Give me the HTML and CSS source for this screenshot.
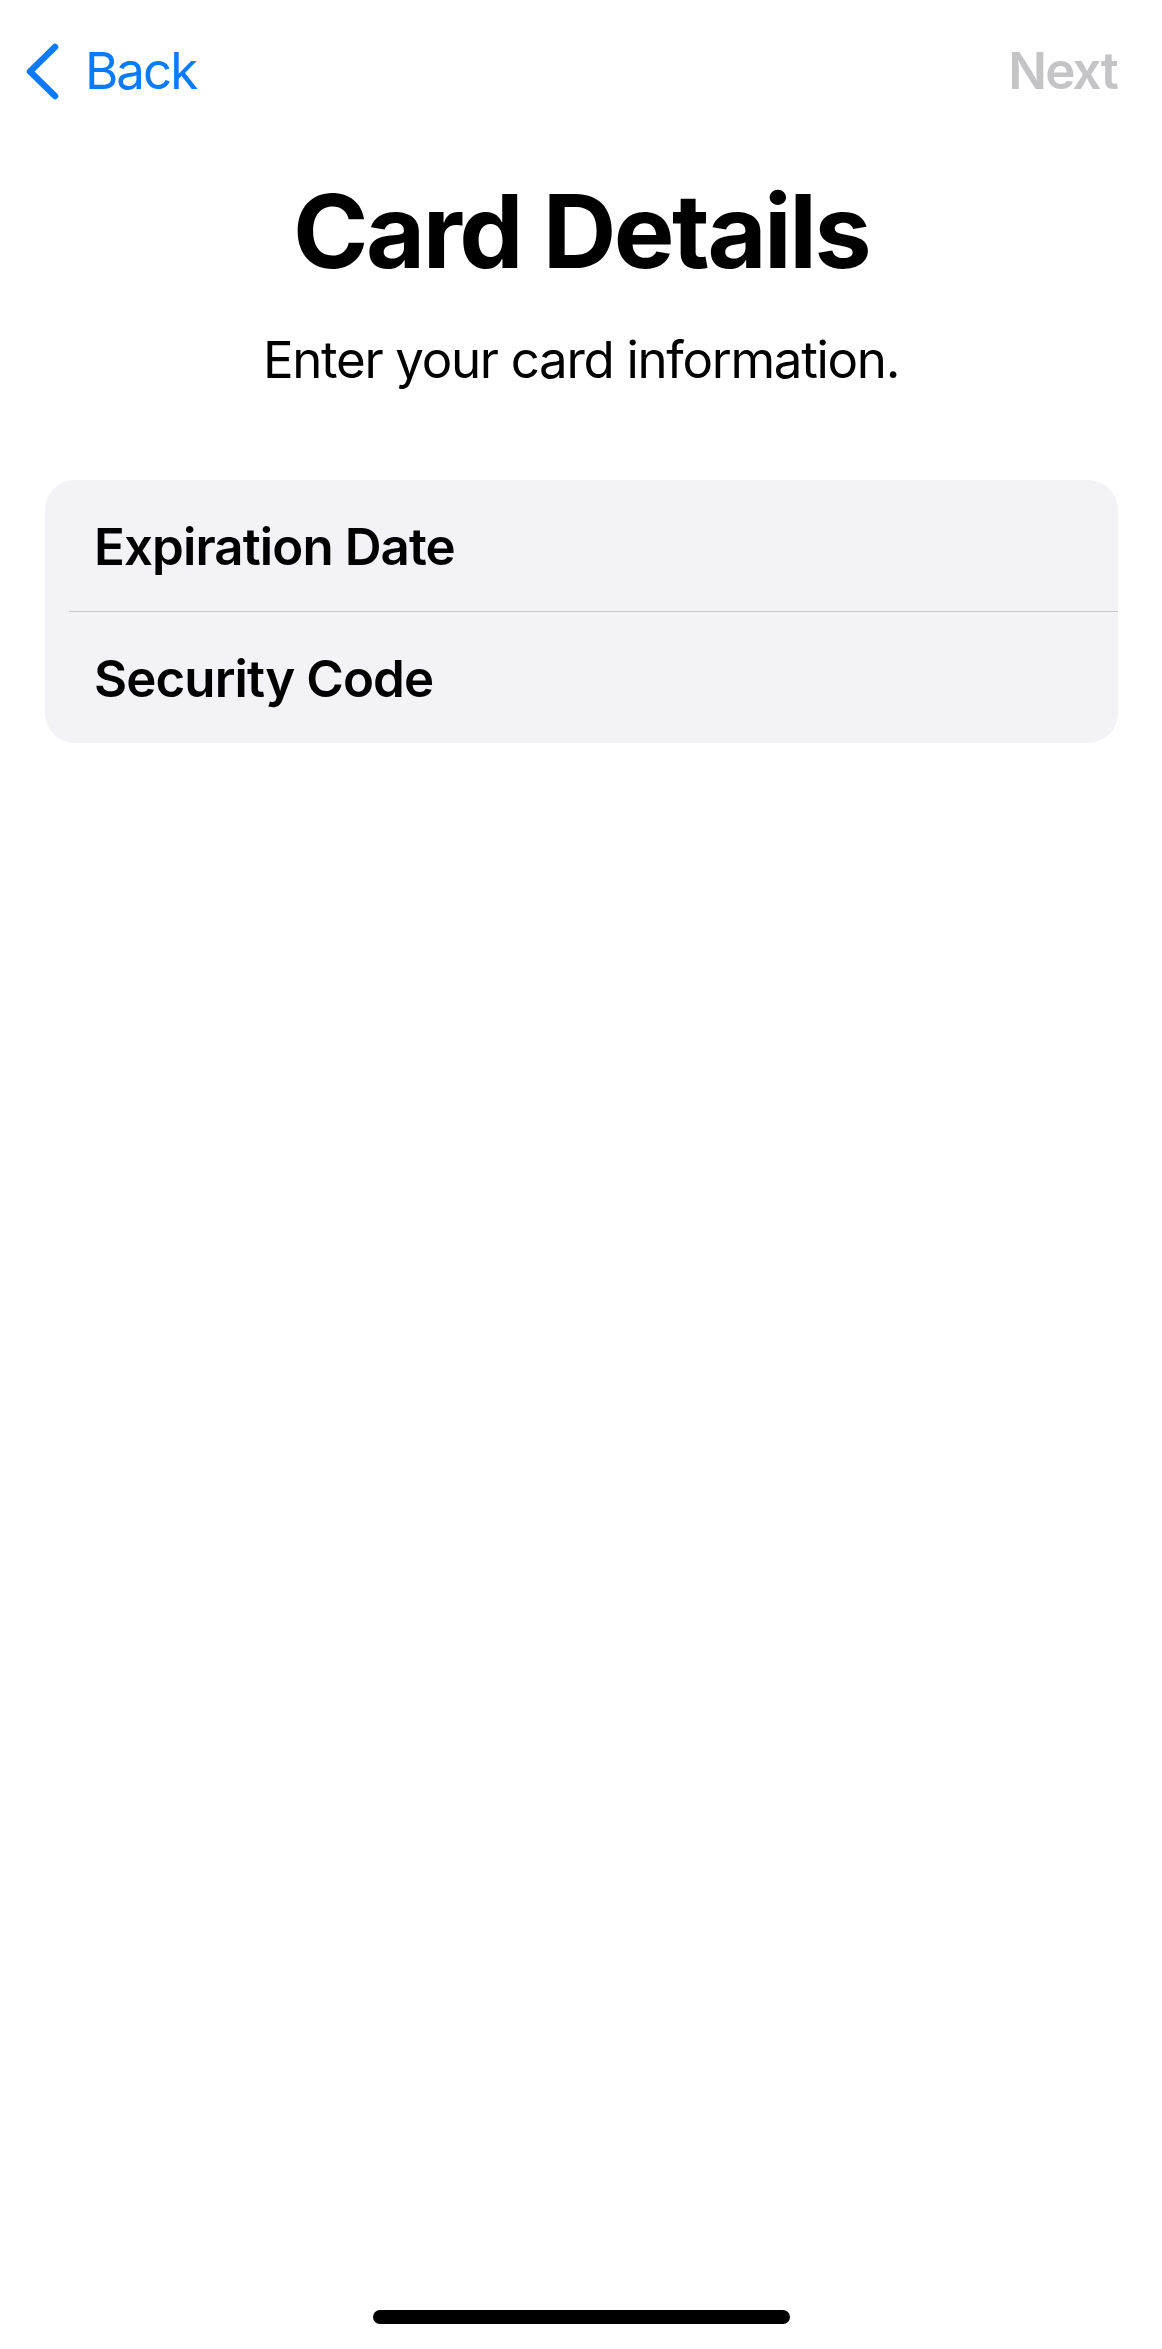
FILE: index.html
```html
<!DOCTYPE html>
<html lang="en">

<head>
    <title>Card Details</title>
    <meta charset="UTF-8" />
    <meta name="viewport" content="width=device-width,initial-scale=1" />
    <link rel="stylesheet" href="styles.css">
</head>

<body>
    <main class="screen">
        <nav class="nav">
            <a class="nav-back" href="#">
                <svg class="chevron" width="34" height="57" viewBox="0 0 34 57" aria-hidden="true">
                    <path d="M30 4 L5 28.5 L30 53" fill="none" stroke="#0a7aff" stroke-width="6.5"
                        stroke-linecap="round" stroke-linejoin="round" />
                </svg>
                <span>Back</span>
            </a>
            <span class="nav-next">Next</span>
        </nav>

        <header class="intro">
            <h1 class="title">Card Details</h1>
            <p class="subtitle">Enter your card information.</p>
        </header>

        <section class="group">
            <div class="row">Expiration Date</div>
            <div class="divider"></div>
            <div class="row">Security Code</div>
        </section>

        <div class="home-indicator"></div>
    </main>
</body>

</html>
```

FILE: styles.css
```css
/* Reset */
html,
body,
h1,
p,
main,
nav,
header,
section {
    margin: 0;
    padding: 0;
}

* {
    box-sizing: border-box;
}

/* Variables */
:root {
    --text-color: #000000;
    --tint-color: #0a7aff;
    --disabled-color: #c4c4c6;
    --group-color: #f2f2f7;
    --separator-color: #c6c6c8;
}

body {
    background: #ffffff;
    color: var(--text-color);
    font-family: Inter, "Noto Sans", "Liberation Sans", sans-serif;
}

.screen {
    display: flex;
    flex-direction: column;
    min-height: 2349px;
}

/* Navigation bar */
.nav {
    display: flex;
    justify-content: space-between;
    align-items: center;
    padding: 41px 45px 0 25px;
    font-size: 51px;
    line-height: 60px;
}

.nav-back {
    display: flex;
    align-items: center;
    gap: 26px;
    color: var(--tint-color);
    text-decoration: none;
    letter-spacing: -2px;
}

.chevron {
    display: block;
}

.nav-next {
    color: var(--disabled-color);
    font-weight: 600;
    letter-spacing: -1.7px;
}

/* Heading */
.intro {
    display: flex;
    flex-direction: column;
    align-items: center;
    text-align: center;
    padding-top: 69px;
}

.title {
    font-size: 102px;
    line-height: 122px;
    font-weight: 700;
    letter-spacing: -2.5px;
}

.subtitle {
    margin-top: 38px;
    font-size: 51px;
    line-height: 60px;
    letter-spacing: -1.3px;
}

/* Grouped rows */
.group {
    margin: 90px 44px 0 45px;
    background: var(--group-color);
    border-radius: 30px;
    overflow: hidden;
}

.row {
    padding: 37px 49px 34px;
    font-size: 51px;
    line-height: 60px;
    font-weight: 600;
    letter-spacing: -0.9px;
}

.divider {
    height: 1px;
    margin-left: 24px;
    background: var(--separator-color);
}

/* Home indicator */
.home-indicator {
    align-self: center;
    width: 417px;
    height: 14px;
    margin: auto 0 25px;
    border-radius: 7px;
    background: #000000;
}
```
